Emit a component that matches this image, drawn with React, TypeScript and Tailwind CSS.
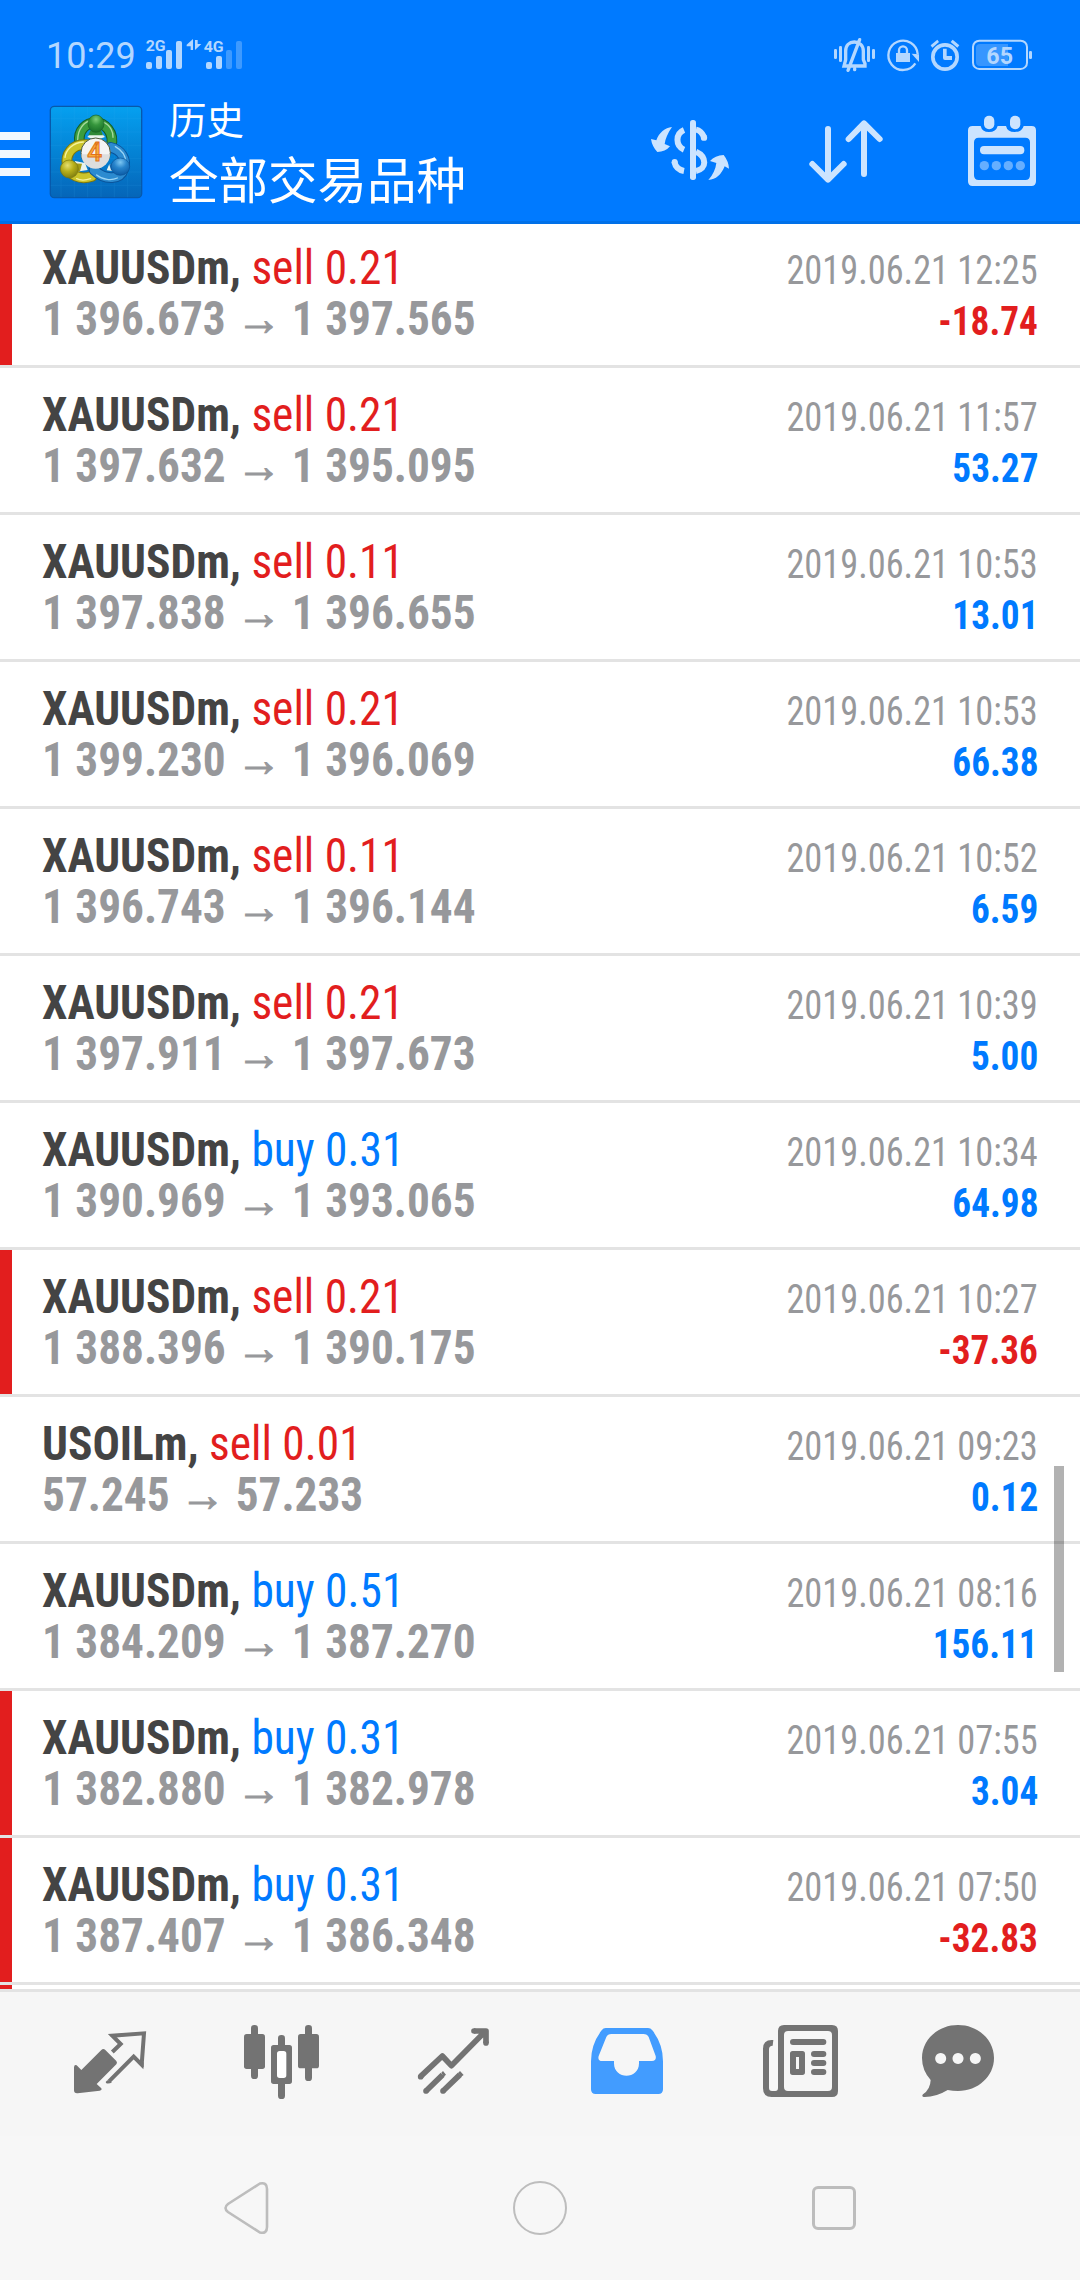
import type { ReactNode } from 'react';
import clsx from 'clsx';

type Deal = {
  symbol: string;
  side: 'buy' | 'sell';
  lots: string;
  open: string;
  close: string;
  time: string;
  profit: string;
  stopped?: boolean;
};

const deals: Deal[] = [
  { symbol: 'XAUUSDm', side: 'sell', lots: '0.21', open: '1 396.673', close: '1 397.565', time: '2019.06.21 12:25', profit: '-18.74', stopped: true },
  { symbol: 'XAUUSDm', side: 'sell', lots: '0.21', open: '1 397.632', close: '1 395.095', time: '2019.06.21 11:57', profit: '53.27' },
  { symbol: 'XAUUSDm', side: 'sell', lots: '0.11', open: '1 397.838', close: '1 396.655', time: '2019.06.21 10:53', profit: '13.01' },
  { symbol: 'XAUUSDm', side: 'sell', lots: '0.21', open: '1 399.230', close: '1 396.069', time: '2019.06.21 10:53', profit: '66.38' },
  { symbol: 'XAUUSDm', side: 'sell', lots: '0.11', open: '1 396.743', close: '1 396.144', time: '2019.06.21 10:52', profit: '6.59' },
  { symbol: 'XAUUSDm', side: 'sell', lots: '0.21', open: '1 397.911', close: '1 397.673', time: '2019.06.21 10:39', profit: '5.00' },
  { symbol: 'XAUUSDm', side: 'buy', lots: '0.31', open: '1 390.969', close: '1 393.065', time: '2019.06.21 10:34', profit: '64.98' },
  { symbol: 'XAUUSDm', side: 'sell', lots: '0.21', open: '1 388.396', close: '1 390.175', time: '2019.06.21 10:27', profit: '-37.36', stopped: true },
  { symbol: 'USOILm', side: 'sell', lots: '0.01', open: '57.245', close: '57.233', time: '2019.06.21 09:23', profit: '0.12' },
  { symbol: 'XAUUSDm', side: 'buy', lots: '0.51', open: '1 384.209', close: '1 387.270', time: '2019.06.21 08:16', profit: '156.11' },
  { symbol: 'XAUUSDm', side: 'buy', lots: '0.31', open: '1 382.880', close: '1 382.978', time: '2019.06.21 07:55', profit: '3.04', stopped: true },
  { symbol: 'XAUUSDm', side: 'buy', lots: '0.31', open: '1 387.407', close: '1 386.348', time: '2019.06.21 07:50', profit: '-32.83', stopped: true },
];

// Icons are drawn on a grid of 3 units per pixel
function Icon({ box, className, children }: { box: string; className: string; children: ReactNode }) {
  return (
    <svg viewBox={box} className={clsx('shrink-0 overflow-visible', className)} fill="currentColor">
      {children}
    </svg>
  );
}

function StatusBar() {
  return (
    <div className="flex h-[76px] items-start pt-[37px] pr-[48px] pl-[46px] text-[#b3d7ff]">
      <span className="w-[100px] font-['Roboto',sans-serif] text-[36px] leading-[39px]">10:29</span>

      {/* Signal */}
      <Icon box="438 21 288 99" className="h-[33px] w-[96px]">
        <text x="437" y="64" fontSize="44" fontWeight="700" fontFamily="Roboto, sans-serif" textLength="60" lengthAdjust="spacingAndGlyphs">2G</text>
        <rect x="438" y="96" width="18" height="21" rx="6" />
        <rect x="468" y="78" width="18" height="39" rx="6" />
        <rect x="498" y="60" width="18" height="57" rx="6" />
        <rect x="528" y="33" width="18" height="84" rx="6" />
        <path d="M579 27v33h-7V49h-12v-5zM585 30h8v12h11l-19 18z" />
        <text x="611" y="66" fontSize="44" fontWeight="700" fontFamily="Roboto, sans-serif" textLength="60" lengthAdjust="spacingAndGlyphs">4G</text>
        <rect x="618" y="96" width="18" height="21" rx="6" />
        <rect x="648" y="78" width="18" height="39" rx="6" />
        <rect x="678" y="60" width="18" height="57" rx="6" opacity=".35" />
        <rect x="708" y="33" width="18" height="84" rx="6" opacity=".35" />
      </Icon>

      <div className="ml-auto flex gap-[12px]">
        {/* Silent */}
        <Icon box="582 51 123 105" className="h-[35px] w-[41px]">
          <rect x="582" y="87" width="9" height="30" rx="4" />
          <rect x="597" y="78" width="9" height="48" rx="4" />
          <rect x="681" y="78" width="9" height="48" rx="4" />
          <rect x="696" y="87" width="9" height="30" rx="4" />
          <path d="M612 138h63V131L670 119V93C670 76 658 66 643 66S617 76 617 93V119L612 138zM659 59L624 151M644 146v3" fill="none" stroke="currentColor" strokeWidth="10" strokeLinecap="round" />
        </Icon>
        {/* Rotation lock */}
        <Icon box="741 51 96 105" className="h-[35px] w-[32px]">
          <path d="M833 102A44 44 0 1 0 826 130" fill="none" stroke="currentColor" strokeWidth="7" />
          <path d="M815 101L837 103V126zM768 99h42v27h-42z" />
          <path d="M777 101V91a12 12 0 0 1 24 0v10" fill="none" stroke="currentColor" strokeWidth="7" />
        </Icon>
        {/* Alarm */}
        <Icon box="873 51 84 105" className="h-[35px] w-[28px]">
          <circle cx="915" cy="111" r="36.500" fill="none" stroke="currentColor" strokeWidth="11" />
          <path d="M909 86h11v22h16v12H915q-6 0-6-6zM872 76l20-17 5 7-20 17zM958 76l-20-17-6 7 20 17z" />
        </Icon>
        {/* Battery */}
        <Icon box="996 51 180 105" className="ml-px h-[35px] w-[60px]">
          <rect x="999" y="62" width="162" height="85" rx="19" fill="none" stroke="currentColor" strokeWidth="6" />
          <path d="M1020 72h84v66h-84q-12 0-12-12V84q0-12 12-12z" opacity=".3" />
          <rect x="1167" y="93" width="9" height="24" rx="4" />
          <text x="1079" y="131" textAnchor="middle" fontSize="72" fontWeight="700" fontFamily="Roboto, sans-serif" textLength="80" lengthAdjust="spacingAndGlyphs">65</text>
        </Icon>
      </div>
    </div>
  );
}

function Logo() {
  return (
    <svg viewBox="57 45 282 282" className="h-[94px] w-[94px] shrink-0">
      <defs>
        <linearGradient id="tile" x1="0" y1="0" x2="0" y2="1">
          <stop offset="0" stopColor="#05a0f0" />
          <stop offset=".55" stopColor="#0480d2" />
          <stop offset="1" stopColor="#0565b8" />
        </linearGradient>
        <radialGradient id="green" cx=".5" cy=".25" r=".75">
          <stop offset="0" stopColor="#7fcf7a" />
          <stop offset=".45" stopColor="#36963d" />
          <stop offset="1" stopColor="#186f28" />
        </radialGradient>
        <radialGradient id="yellow" cx=".4" cy=".3" r=".75">
          <stop offset="0" stopColor="#e6df70" />
          <stop offset=".45" stopColor="#b8b01c" />
          <stop offset="1" stopColor="#7b7a10" />
        </radialGradient>
        <radialGradient id="blue" cx=".5" cy=".25" r=".75">
          <stop offset="0" stopColor="#7cc6f2" />
          <stop offset=".45" stopColor="#2784cc" />
          <stop offset="1" stopColor="#0b5aa5" />
        </radialGradient>
      </defs>
      <rect x="61" y="49" width="274" height="274" rx="12" fill="url(#tile)" stroke="#0759ab" strokeWidth="4" />
      <path d="M62 86h272M62 126h272M62 166h272M62 206h272M62 246h272M62 286h272M93 50v272M133 50v272M173 50v272M213 50v272M253 50v272M293 50v272" stroke="#35aaf0" strokeWidth="2" opacity=".2" />
      {/* Body shapes: dark outline, coloured band, highlight */}
      <g fill="none" strokeLinecap="round">
        <path d="M149 158C142 120 170 98 196 98S256 125 243 172" stroke="#155e25" strokeWidth="32" />
        <path d="M149 158C142 120 170 98 196 98S256 125 243 172" stroke="#3c9d3e" strokeWidth="26" />
        <path d="M143 150C143 115 165 96 178 93M220 97C240 104 250 125 249 142" stroke="#a5d99a" strokeWidth="4" />
        <path d="M170 164C125 160 105 195 112 226S150 271 186 259" stroke="#7d770c" strokeWidth="32" />
        <path d="M170 164C125 160 105 195 112 226S150 271 186 259" stroke="#cbc42a" strokeWidth="26" />
        <path d="M160 156C128 158 107 180 105 202M140 266C152 272 170 270 182 266" stroke="#f7f39b" strokeWidth="4" />
        <path d="M242 172C275 180 291 208 281 238S228 274 192 240" stroke="#0a549b" strokeWidth="32" />
        <path d="M242 172C275 180 291 208 281 238S228 274 192 240" stroke="#2c8bd0" strokeWidth="26" />
        <path d="M256 170C276 181 287 198 287 216M200 255C218 270 245 272 262 264" stroke="#9bd5f5" strokeWidth="4" />
      </g>
      <path d="M172 141l13-14h26l14 14-28 10zM139 245l-4-32 30 6 8 21zM254 244l-24-3 7-17 27-8z" fill="#e9f4ee" />
      <path d="M183 118h29l7 18H175z" fill="#2f8a38" />
      <path d="M130 220l26 1-6 23-26 8z" fill="#a39c1a" />
      <path d="M258 214l-20 10 5 16 24 7z" fill="#1c70b8" />
      <ellipse cx="198" cy="101" rx="24" ry="26" fill="url(#green)" stroke="#196426" strokeWidth="2" />
      <circle cx="118" cy="237" r="27" fill="url(#yellow)" stroke="#77740f" strokeWidth="2" />
      <ellipse cx="271" cy="230" rx="28" ry="26" fill="url(#blue)" stroke="#0b5599" strokeWidth="2" />
      <circle cx="197" cy="188" r="44" fill="#f4f4f4" stroke="#4d5a3c" strokeWidth="3" />
      <path d="M154 193h86a43 43 0 0 1-86 0z" fill="#dedede" />
      <text x="194" y="214" textAnchor="middle" fontSize="78" fontWeight="500" fontFamily="Roboto, sans-serif" fill="#f8b03c" stroke="#e2701c" strokeWidth="3">4</text>
    </svg>
  );
}

function Toolbar() {
  return (
    <div className="flex h-[145px] items-start">
      {/* Menu */}
      <button className="mt-[56px] flex w-[30px] flex-col gap-[10px]">
        <span className="h-[8px] bg-[#f2f8ff]" />
        <span className="h-[8px] bg-[#f2f8ff]" />
        <span className="h-[8px] bg-[#f2f8ff]" />
      </button>
      <div className="mt-[29px] ml-[19px]">
        <Logo />
      </div>
      <div className="mt-[14px] ml-[26px] font-['Noto_Sans_CJK_SC',sans-serif] text-white">
        <div className="text-[37.5px] leading-[55px]">历史</div>
        <h1 className="text-[49.5px] leading-[66px] font-normal">全部交易品种</h1>
      </div>

      <div className="mt-[39px] mr-[44px] ml-auto flex text-[#cce4ff]">
        {/* Currency */}
        <Icon box="33 285 234 216" className="h-[72px] w-[78px]">
          <path d="M96 321C83 340 76 357 74 372L90 379Q76 396 52 396Q36 379 33 357L49 361C57 338 75 323 96 321zM205 480C219 464 227 447 229 429L210 423Q225 407 251 405Q266 424 267 446L254 439C244 464 228 479 205 480z" />
          <rect x="150" y="300" width="18" height="180" rx="8" />
          <path d="M132 330A32 32 0 0 0 132 389M103 425C106 440 116 450 132 453" fill="none" stroke="currentColor" strokeWidth="18" />
          <circle cx="104" cy="426" r="9" />
          <path d="M168 329Q184 332 192 351M168 395C201 410 201 447 168 453" fill="none" stroke="currentColor" strokeWidth="18" />
          <circle cx="192" cy="353" r="9.500" />
        </Icon>
        {/* Sort */}
        <Icon box="507 285 222 216" className="ml-[80px] h-[72px] w-[74px]">
          <path d="M564 327V477M517 432L564 479L611 432M672 462V312M626 357L672 310L719 357" fill="none" stroke="currentColor" strokeWidth="18" strokeLinecap="round" strokeLinejoin="round" />
        </Icon>
        {/* Calendar */}
        <Icon box="984 285 204 216" className="ml-[85px] h-[72px] w-[68px]">
          <path fillRule="evenodd" d="M998 318h24q4 18 25 18t26-18h25q4 18 26 18t27-18h24q13 0 13 13V484q0 14-14 14H998q-14 0-14-14V331q0-13 14-13zM1016 353q-14 0-14 14v99q0 14 14 14h140q14 0 14-14v-99q0-14-14-14z" />
          <rect x="1032" y="287" width="31" height="41" rx="15" />
          <rect x="1110" y="287" width="31" height="41" rx="15" />
          <rect x="1020" y="378" width="133" height="25" rx="12" />
          <g opacity=".5">
            <circle cx="1033" cy="437" r="14" />
            <circle cx="1069" cy="437" r="14" />
            <circle cx="1105" cy="437" r="14" />
            <circle cx="1141" cy="437" r="14" />
          </g>
        </Icon>
      </div>
    </div>
  );
}

function DealRow({ deal }: { deal: Deal }) {
  return (
    <li
      className={clsx(
        'relative h-[147px] shrink-0 border-b-[3px] border-[#e3e3e3] pt-[21px] pr-[42px] pl-[42px] leading-[51px]',
        deal.stopped && 'before:absolute before:inset-y-0 before:left-0 before:w-[12px] before:bg-[#e21e1e]',
      )}
    >
      <div className="flex h-[51px] items-baseline justify-between">
        <p className="origin-left scale-x-[.946] text-[48px] whitespace-pre">
          <span className="font-bold text-[#444]">{deal.symbol}, </span>
          <span className={deal.side === 'buy' ? 'text-[#007aff]' : 'text-[#e21e1e]'}>
            {deal.side} {deal.lots}
          </span>
        </p>
        <time className="origin-right scale-x-[.908] text-[40px] text-[#97989b]">{deal.time}</time>
      </div>
      <div className="flex h-[51px] items-baseline justify-between font-bold">
        <p className="origin-left scale-x-[.943] text-[48px] text-[#97989b]">
          {deal.open}{' '}
          <span className="font-['Liberation_Sans',sans-serif] leading-none [-webkit-text-stroke:1px_#97989b]">→</span>{' '}
          {deal.close}
        </p>
        <p
          className={clsx(
            'origin-right scale-x-[.932] text-[40px]',
            deal.profit.startsWith('-') ? 'text-[#e21e1e]' : 'text-[#007aff]',
          )}
        >
          {deal.profit}
        </p>
      </div>
    </li>
  );
}

function TabBar() {
  return (
    <nav className="flex h-[147px] items-start border-t-[3px] border-[#e3e3e3] bg-[#f6f6f6] pt-[33px] text-[#737373]">
      {/* Quotes */}
      <Icon box="42 45 216 222" className="ml-[74px] h-[74px] w-[72px]">
        <path d="M42 172q1-10 8-6l14 14 60-60q6-6 12 0l33 33q4 5 0 10l-59 59 14 13q3 6-5 7l-66 8q-11 1-11-9z" />
        <path d="M157 126L182 102L157 77L252 70L245 164L221 140L147 214" fill="none" stroke="currentColor" strokeWidth="12" />
        <path d="M149 75l6-3 14 5-10 7-8-6zM238 162l13-5v15h-5zM137 216l5-5 14 6q-8 5-17 3z" />
      </Icon>
      {/* Charts */}
      <Icon box="552 45 225 222" className="ml-[98px] h-[74px] w-[75px]">
        <rect x="573" y="45" width="21" height="162" rx="10" />
        <rect x="552" y="72" width="63" height="105" rx="8" />
        <rect x="735" y="45" width="21" height="168" rx="10" />
        <rect x="714" y="72" width="63" height="103" rx="8" />
        <rect x="654" y="75" width="21" height="60" rx="10" />
        <rect x="654" y="205" width="21" height="62" rx="10" />
        <rect x="645" y="115" width="39" height="97" fill="#fff" />
        <path fillRule="evenodd" d="M641 105h47q8 0 8 8V214q0 8-8 8H641q-8 0-8-8V113q0-8 8-8zM659 123q-8 0-8 8v65q0 8 8 8h12q8 0 8-8v-65q0-8-8-8z" />
      </Icon>
      {/* Trade */}
      <Icon box="1074 45 213 222" className="ml-[99px] h-[74px] w-[71px]">
        <path d="M1082 199L1147 138L1174 167L1276 64M1242 63H1278V99M1098 243L1148 194M1149 243L1200 194" fill="none" stroke="currentColor" strokeWidth="17" strokeLinejoin="round" />
        <circle cx="1082" cy="200" r="8.500" />
        <circle cx="1242" cy="63" r="8.500" />
        <circle cx="1278" cy="99" r="8.500" />
        <circle cx="1098" cy="243" r="8.500" />
        <circle cx="1149" cy="243" r="8.500" />
        <path d="M1144 188l5-5 9 11-7 6zM1195 188l5-5 11 12-8 5z" />
      </Icon>
      {/* History */}
      <Icon box="33 45 216 222" className="ml-[102px] h-[74px] w-[72px] text-[#429cff]">
        <path fillRule="evenodd" d="M77 54H204Q212 54 217 61Q249 102 249 154V238Q249 252 235 252H47Q33 252 33 238V154Q33 102 65 61Q70 54 77 54zM94 72Q83 72 79 81L56 138Q52 153 67 153H102V160C102 210 177 210 177 160V153H216Q230 153 227 138L206 81Q202 72 190 72z" />
      </Icon>
      {/* News */}
      <Icon box="549 45 225 222" className="ml-[100px] h-[74px] w-[75px]">
        <path fillRule="evenodd" d="M612 45H756Q774 45 774 63V243Q774 261 756 261H575Q549 261 549 235V116Q549 90 575 90H580L578 107Q567 107 567 118V234Q567 243 576 243H586Q594 243 594 234V63Q594 45 612 45zM624 63Q612 63 612 75V231Q612 243 624 243H744Q756 243 756 231V75Q756 63 744 63zM638 123H667Q675 123 675 131V187Q675 195 667 195H638Q630 195 630 187V131Q630 123 638 123zM648 141V177H657V141z" />
        <rect x="630" y="87" width="109" height="18" rx="9" />
        <rect x="693" y="123" width="46" height="18" rx="9" />
        <rect x="693" y="150" width="46" height="18" rx="9" />
        <rect x="693" y="177" width="46" height="18" rx="9" />
      </Icon>
      {/* Messages */}
      <Icon box="1026 45 216 222" className="ml-[84px] h-[74px] w-[72px]">
        <path fillRule="evenodd" d="M1134 45C1194 45 1242 89 1242 144C1242 199 1194 243 1134 243Q1118 243 1103 240Q1067 262 1031 261Q1024 259 1029 253Q1051 238 1052 210Q1026 181 1026 144C1026 89 1074 45 1134 45zM1082 129a16.500 16.500 0 1 0 .1 0zM1134 129a16.500 16.500 0 1 0 .1 0zM1186 129a16.500 16.500 0 1 0 .1 0z" />
      </Icon>
    </nav>
  );
}

function SystemNav() {
  return (
    <div className="flex h-[144px] items-center justify-between bg-[#f7f7f7] px-[224px] text-[#bdbdbd]">
      <svg viewBox="0 0 45 54" className="h-[54px] w-[45px]" fill="none" stroke="currentColor" strokeWidth="2.600">
        <path d="M36 2.500L4 23Q-1 27 4 31L36 51.500Q43 53 43 46V8Q43 1 36 2.500z" />
      </svg>
      <div className="mr-px h-[54px] w-[54px] rounded-full border-[2.5px] border-current" />
      <div className="h-[44px] w-[44px] rounded-[6px] border-[3px] border-current" />
    </div>
  );
}

export default function App() {
  return (
    <div className="flex h-[2280px] w-[1080px] flex-col overflow-hidden bg-white">
      <header className="relative z-10 h-[224px] shrink-0 border-b-[3px] border-[#0070e8] bg-[#007aff]">
        <StatusBar />
        <Toolbar />
      </header>

      <main className="relative -mt-[3px] flex h-[1768px] shrink-0 flex-col overflow-hidden">
        <ul className="font-['Roboto_Condensed','Roboto',sans-serif] [font-stretch:75%]">
          {deals.map((deal) => (
            <DealRow key={deal.time + deal.profit} deal={deal} />
          ))}
        </ul>
        {/* Top of the next, cut off row */}
        <div className="h-[4px] w-[12px] shrink-0 bg-[#e21e1e]" />
        {/* Scroll thumb */}
        <div className="absolute top-[1245px] right-[16px] h-[206px] w-[10px] bg-black/30" />
      </main>

      <TabBar />
      <SystemNav />
    </div>
  );
}
